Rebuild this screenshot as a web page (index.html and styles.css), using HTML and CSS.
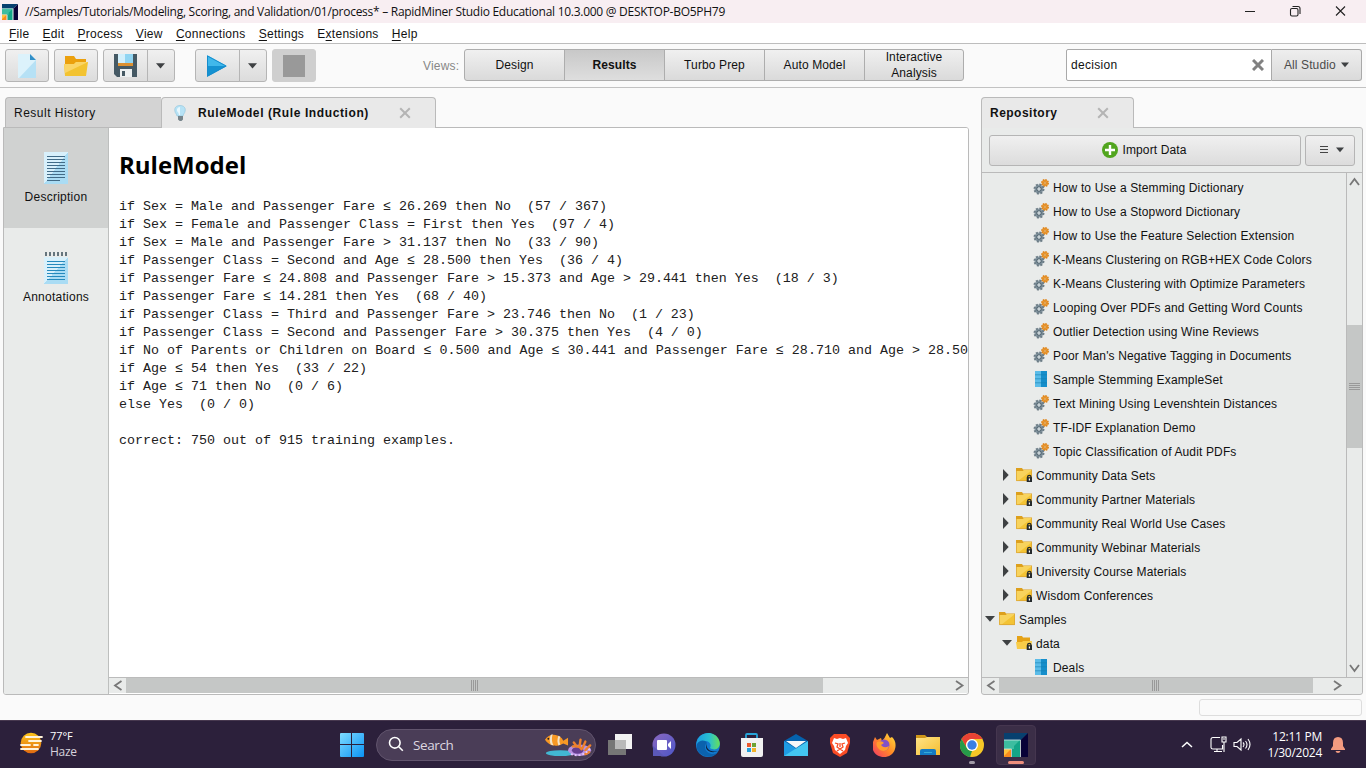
FILE: index.html
```html
<!DOCTYPE html>
<html lang="en">
<head>
<meta charset="utf-8">
<title>RapidMiner Studio</title>
<link rel="stylesheet" href="styles.css">
</head>
<body>
<svg class="defs" width="0" height="0" aria-hidden="true">
  <defs>
    <linearGradient id="paper" x1="0" y1="0" x2="1" y2="1"><stop offset=".5" stop-color="#d8f0fb"/><stop offset=".5" stop-color="#aadcf4"/></linearGradient>
    <linearGradient id="win" x1="0" y1="0" x2="1" y2="1"><stop offset="0" stop-color="#7fdcff"/><stop offset="1" stop-color="#0a93f5"/></linearGradient>
    <linearGradient id="sun" x1="0" y1="0" x2="0" y2="1"><stop offset="0" stop-color="#fdc419"/><stop offset="1" stop-color="#df6a12"/></linearGradient>
    <linearGradient id="edge1" x1="0" y1="0" x2="1" y2="0"><stop offset="0" stop-color="#1b9de2"/><stop offset=".55" stop-color="#29bfd0"/><stop offset="1" stop-color="#67df58"/></linearGradient>
    <linearGradient id="chat" x1="0" y1="0" x2="1" y2="1"><stop offset="0" stop-color="#8b69c0"/><stop offset="1" stop-color="#4c56c8"/></linearGradient>
    <linearGradient id="fox" x1="1" y1="0" x2="0" y2="1"><stop offset="0" stop-color="#ffe43f"/><stop offset=".5" stop-color="#ff8b26"/><stop offset="1" stop-color="#f03668"/></linearGradient>
    <linearGradient id="explorer" x1="0" y1="0" x2="1" y2="1"><stop offset="0" stop-color="#ffe487"/><stop offset="1" stop-color="#f5bd30"/></linearGradient>
  </defs>
  <symbol id="rm" viewBox="0 0 24 24"><path fill="#07406f" d="M0 0h24l-7 7H0z"/><path fill="#080238" d="M24 0v24h-7V7z"/><path fill="#14a587" d="M0 7h16v17H8v-8H0z"/><path fill="#3dbda0" d="M0 7h16l-6 6v3H0z"/><path fill="#fa8b1c" d="M0 16h7v8H0z"/><path fill="#ffc23b" d="M0 16h7l-7 7z"/><path fill="none" stroke="#d5ebe8" stroke-width=".8" d="M0 7h16.500v17M0 16h7.500v8"/></symbol>
  <symbol id="process" viewBox="0 0 16 16"><circle cx="12" cy="4" r="3.2" fill="#ee9a32" stroke="#dd861f" stroke-width="1.600" stroke-dasharray="1.500 1"/><circle cx="12" cy="4" r="1.200" fill="#f7d5a0" stroke="#c97914" stroke-width=".7"/><circle cx="6" cy="10" r="4.500" fill="#8799a4" stroke="#6c7c86" stroke-width="2" stroke-dasharray="2 1.500"/><circle cx="6" cy="10" r="2.200" fill="#e7edf0" stroke="#51646f" stroke-width="1.100"/><circle cx="6" cy="10" r=".8" fill="#a0afb7"/></symbol>
  <symbol id="dataset" viewBox="0 0 16 16"><path fill="#5bbce8" d="M2 0h6v16H2z"/><path fill="#168ecb" d="M8 0h6v16H8z"/><path stroke="#147dae" stroke-width=".6" d="M2 3.800h12M2 7.800h12M2 11.800h12"/></symbol>
  <symbol id="folder" viewBox="0 0 16 16"><path fill="#dda01d" d="M0 1h6l1 1.500h9V5H0z"/><path fill="#f3c334" d="M0 4h7l1-1h8v11H0z"/><path fill="#f8d35d" d="M0 4h7l1-1h8L2 14H0z"/><path fill="none" stroke="#d9a333" stroke-width=".8" d="M.4 4v9.600h15.200V3"/></symbol>
  <symbol id="lock" viewBox="0 0 16 16"><path fill="none" stroke="#252a2c" stroke-width="1.300" d="M11.700 11V9.600q0-1.300 1.600-1.300t1.600 1.300V11"/><path fill="#252a2c" d="M10.700 10.200H16V15h-5.300z"/><path fill="#fff" d="M12.800 11.500h1.200v2h-1.200z"/></symbol>
  <symbol id="opened" viewBox="0 0 16 16"><path fill="#e5a216" d="M1 1h5l1 1.500h7V8H1z"/><path fill="#f8cc49" d="M0 7h6l1-1h9l-1 8H1z"/></symbol>
  <symbol id="right" viewBox="0 0 6 12"><path fill="#3e4143" d="M0 0l5.700 6L0 12z"/></symbol>
  <symbol id="down" viewBox="0 0 10 6"><path fill="#3e4143" d="M0 0h10L5 5.800z"/></symbol>
  <symbol id="cross" viewBox="0 0 12 12"><path fill="none" stroke="#b4b4b4" stroke-width="2" d="M1.200 1.200l9.600 9.600m0-9.600l-9.600 9.600"/></symbol>
</svg>

<header class="titlebar">
  <svg class="app-icon"><use href="#rm"/></svg>
  <span class="window-title">//Samples/Tutorials/Modeling, Scoring, and Validation/01/process* – RapidMiner Studio Educational 10.3.000 @ DESKTOP-BO5PH79</span>
  <svg class="window-controls" width="110" height="20" fill="none" stroke="#222" stroke-width="1.100"><path d="M5 9.500h10M96 4.500l9 9m0-9l-9 9"/><rect x="50.500" y="6.500" width="7.500" height="7.500" rx="1.500"/><path d="M52.500 4.500h5.500q2 0 2 2V12"/></svg>
</header>

<nav class="menubar">
  <span><u>F</u>ile</span><span><u>E</u>dit</span><span><u>P</u>rocess</span><span><u>V</u>iew</span><span><u>C</u>onnections</span><span><u>S</u>ettings</span><span>E<u>x</u>tensions</span><span><u>H</u>elp</span>
</nav>

<section class="toolbar">
  <div class="tools">
    <div class="button single"><svg width="18" height="24" viewBox="0 0 18 24"><path fill="#dcf2fb" d="M0 0h12l6 6v18H0z"/><path fill="#b6e1f5" d="M18 6v18H1z"/><path fill="#318fc8" d="M12 0l6 6h-6z"/></svg></div>
    <div class="button single"><svg width="24" height="22" viewBox="0 0 24 22"><path fill="#eba00d" d="M1 1h9l2 3h10v8H1z"/><path fill="#f3c331" d="M0 9h10l2-2h12l-2 14H1z"/><path fill="#fad567" d="M0 9h10l2-2h12L1 18z"/></svg></div>
    <div class="split"><div class="button"><svg width="23" height="23" viewBox="0 0 23 23"><path fill="#455964" d="M0 0h23v23H3l-3-3z"/><path fill="#d2effb" d="M4 0h15v9H4z"/><path fill="#91d5f2" d="M11 0h8v9h-8z"/><path fill="#dc9132" d="M4 9h15v3H4z"/><path fill="#edf1f2" d="M6 15h12v8H6z"/><path fill="#455964" d="M8 17h3v5H8z"/></svg></div><div class="button drop"><svg width="9" height="6"><use href="#down"/></svg></div></div>
    <div class="split run"><div class="button"><svg width="20" height="22" viewBox="0 0 20 22"><path fill="#40b8eb" d="M0 0l20 11H0z"/><path fill="#1592d1" d="M0 11h20L0 22z"/><path fill="none" stroke="#168ccc" d="M.5 1l18.500 10L.5 21z"/></svg></div><div class="button drop"><svg width="9" height="6"><use href="#down"/></svg></div></div>
    <div class="button stop"><i></i></div>
  </div>
  <div class="views"><span class="views-label">Views:</span><div class="segments"><div>Design</div><div class="active">Results</div><div>Turbo Prep</div><div>Auto Model</div><div>Interactive<br>Analysis</div></div></div>
  <div class="search"><div class="query">decision<svg width="12" height="12"><path fill="none" stroke="#818181" stroke-width="3" d="M1 1l10 10m0-10L1 11"/></svg></div><div class="scope">All Studio<svg width="8" height="6"><use href="#down"/></svg></div></div>
</section>

<main class="workspace">
  <section class="results">
    <div class="tabs">
      <div class="tab history">Result History</div>
      <div class="tab model"><svg width="12" height="17" viewBox="0 0 12 17"><path fill="#b7e2f5" stroke="#8ec5dc" stroke-width=".6" d="M3 11Q2.500 9 1.300 7.500C-.5 3 2.200.5 6 .5S12.500 3 10.700 7.500Q9.500 9 9 11z"/><path fill="#e8f7fd" d="M3 4q1-2 3-2v8H5q0-2-2-4z"/><path fill="#76848b" d="M4 11h5v3.500L7.500 16H5.700L4 14.500z"/></svg><b>RuleModel (Rule Induction)</b><svg class="close" width="12" height="12"><use href="#cross"/></svg></div>
    </div>
    <div class="result-panel">
      <aside class="side">
        <div class="side-item selected"><svg width="24" height="32"><path fill="url(#paper)" d="M0 0h24v32H0z"/><path stroke="#426b87" stroke-width="1" d="M3 4.500h18M3 7.500h18M3 10.500h18M3 13.500h18M3 16.500h18M3 19.500h18M3 22.500h18M3 25.500h18M3 28.500h13"/></svg><span>Description</span></div>
        <div class="side-item"><svg width="24" height="32"><path fill="url(#paper)" d="M0 5h24v27H0z"/><path stroke="#66757d" stroke-width="4" stroke-dasharray="2 2" d="M1 2h22"/><path stroke="#268abd" stroke-width="1" d="M3 9.500h18M3 12.500h18M3 15.500h18M3 18.500h18M3 21.500h18M3 24.500h18M3 27.500h18"/></svg><span>Annotations</span></div>
      </aside>
      <div class="document">
        <article>
          <h1>RuleModel</h1>
<pre>if Sex = Male and Passenger Fare ≤ 26.269 then No  (57 / 367)
if Sex = Female and Passenger Class = First then Yes  (97 / 4)
if Sex = Male and Passenger Fare &gt; 31.137 then No  (33 / 90)
if Passenger Class = Second and Age ≤ 28.500 then Yes  (36 / 4)
if Passenger Fare ≤ 24.808 and Passenger Fare &gt; 15.373 and Age &gt; 29.441 then Yes  (18 / 3)
if Passenger Fare ≤ 14.281 then Yes  (68 / 40)
if Passenger Class = Third and Passenger Fare &gt; 23.746 then No  (1 / 23)
if Passenger Class = Second and Passenger Fare &gt; 30.375 then Yes  (4 / 0)
<span class="long-rule">if No of Parents or Children on Board ≤ 0.500 and Age ≤ 30.441 and Passenger Fare ≤ 28.710 and Age &gt; 28.50</span>
if Age ≤ 54 then Yes  (33 / 22)
if Age ≤ 71 then No  (0 / 6)
else Yes  (0 / 0)

correct: 750 out of 915 training examples.</pre>
        </article>
        <div class="hscroll"><svg class="arrow" width="17" height="15"><path d="M12.500 3L6 7.500l6.500 4.500"/></svg><div class="hthumb main-thumb"><i></i></div><svg class="arrow end" width="17" height="15"><path d="M5 3l6.500 4.500L5 12"/></svg></div>
      </div>
    </div>
  </section>

  <section class="repository">
    <div class="tabs"><div class="tab repo-tab"><b>Repository</b><svg class="close" width="12" height="12"><use href="#cross"/></svg></div></div>
    <div class="repo-panel">
      <div class="repo-actions">
        <div class="button import"><svg width="16" height="16"><circle cx="8" cy="8" r="8" fill="#51a51e"/><path d="M8 3v10M3 8h10" stroke="#fff" stroke-width="2.400"/></svg>Import Data</div>
        <div class="button list-menu"><svg width="8" height="8"><path stroke="#444" d="M0 .5h8M0 3.500h8M0 6.500h8"/></svg><svg width="8" height="6"><use href="#down"/></svg></div>
      </div>
      <div class="tree-wrap">
        <ul class="tree">
          <li class="leaf"><svg><use href="#process"/></svg><span>How to Use a Stemming Dictionary</span></li>
          <li class="leaf"><svg><use href="#process"/></svg><span>How to Use a Stopword Dictionary</span></li>
          <li class="leaf"><svg><use href="#process"/></svg><span>How to Use the Feature Selection Extension</span></li>
          <li class="leaf"><svg><use href="#process"/></svg><span>K-Means Clustering on RGB+HEX Code Colors</span></li>
          <li class="leaf"><svg><use href="#process"/></svg><span>K-Means Clustering with Optimize Parameters</span></li>
          <li class="leaf"><svg><use href="#process"/></svg><span>Looping Over PDFs and Getting Word Counts</span></li>
          <li class="leaf"><svg><use href="#process"/></svg><span>Outlier Detection using Wine Reviews</span></li>
          <li class="leaf"><svg><use href="#process"/></svg><span>Poor Man's Negative Tagging in Documents</span></li>
          <li class="leaf"><svg><use href="#dataset"/></svg><span>Sample Stemming ExampleSet</span></li>
          <li class="leaf"><svg><use href="#process"/></svg><span>Text Mining Using Levenshtein Distances</span></li>
          <li class="leaf"><svg><use href="#process"/></svg><span>TF-IDF Explanation Demo</span></li>
          <li class="leaf"><svg><use href="#process"/></svg><span>Topic Classification of Audit PDFs</span></li>
          <li class="branch"><svg class="right"><use href="#right"/></svg><svg><use href="#folder"/><use href="#lock"/></svg><span>Community Data Sets</span></li>
          <li class="branch"><svg class="right"><use href="#right"/></svg><svg><use href="#folder"/><use href="#lock"/></svg><span>Community Partner Materials</span></li>
          <li class="branch"><svg class="right"><use href="#right"/></svg><svg><use href="#folder"/><use href="#lock"/></svg><span>Community Real World Use Cases</span></li>
          <li class="branch"><svg class="right"><use href="#right"/></svg><svg><use href="#folder"/><use href="#lock"/></svg><span>Community Webinar Materials</span></li>
          <li class="branch"><svg class="right"><use href="#right"/></svg><svg><use href="#folder"/><use href="#lock"/></svg><span>University Course Materials</span></li>
          <li class="branch"><svg class="right"><use href="#right"/></svg><svg><use href="#folder"/><use href="#lock"/></svg><span>Wisdom Conferences</span></li>
          <li class="root"><svg class="down"><use href="#down"/></svg><svg><use href="#folder"/></svg><span>Samples</span></li>
          <li class="branch expanded"><svg class="down"><use href="#down"/></svg><svg><use href="#opened"/><use href="#lock"/></svg><span>data</span></li>
          <li class="leaf"><svg><use href="#dataset"/></svg><span>Deals</span></li>
        </ul>
        <div class="vscroll"><svg class="arrow" width="15" height="18"><path d="M3 12l4.500-6L12 12"/></svg><div class="vthumb"><i></i></div><svg class="arrow bottom" width="15" height="18"><path d="M3 6l4.500 6L12 6"/></svg></div>
      </div>
      <div class="hscroll"><svg class="arrow" width="17" height="15"><path d="M12.500 3L6 7.500l6.500 4.500"/></svg><div class="hthumb repo-thumb"><i></i></div><svg class="arrow repo-end" width="17" height="15"><path d="M5 3l6.500 4.500L5 12"/></svg></div>
    </div>
  </section>
</main>
<div class="statusbar"><div class="progress"></div></div>

<footer class="taskbar">
  <div class="weather"><svg width="26" height="24"><circle cx="13" cy="12" r="10.300" fill="url(#sun)"/><path stroke="#fff3da" stroke-width="1.800" stroke-linecap="round" d="M8 6h16M11 10h12M3 14h9M16 14h4M3 18h17"/></svg><div><span>77°F</span><span>Haze</span></div></div>
  <div class="dock">
    <svg class="start" width="24" height="24"><path fill="url(#win)" d="M1 0h10v11H0V1q0-1 1-1zM12 0h11q1 0 1 1v10H12zM0 12h11v12H1q-1 0-1-1zM12 12h12v11q0 1-1 1H12z"/></svg>
    <div class="task-search"><svg width="17" height="17"><circle cx="6.800" cy="6.800" r="5.300"/><path d="M10.800 10.800l4 4"/></svg><span>Search</span>
      <svg class="fish" width="50" height="25" viewBox="0 0 52 26"><ellipse cx="17" cy="22" rx="15" ry="3" fill="#42b8d2"/><path fill="#f79824" d="M1 8q4-6 11-5 6 1 8 6l5-3v8l-5-2q-4 3-9 2Q5 14 1 8z"/><path fill="#f3e4c9" d="M7 3l2-1q-2 7 1 12l-3-1Q5 8 7 3zM15 4l2 1q-2 4 0 8l-2 1q-2-5 0-10z"/><circle cx="4.500" cy="7" r="1" fill="#222"/><ellipse cx="37" cy="19" rx="12" ry="6" fill="#b791e2"/><ellipse cx="35" cy="19" rx="6" ry="3.500" fill="#663e8f"/><path fill="none" stroke="#ed812c" stroke-width="2.500" stroke-linecap="round" d="M30 15q7-1 9 3m-5-3l-3-4m6 4l1-7m2 9l3-7m0 9l5-5m-5 9l4-2"/><path stroke="#e3c4fa" stroke-width="2" stroke-dasharray="2 2" fill="none" d="M28 23q12 4 20-6"/></svg>
    </div>
    <div class="apps">
      <svg viewBox="0 0 24 24"><path fill="#f2f2f2" d="M7 1h17v15H7z"/><path fill="#767676" d="M0 7h18v15H0z"/><path fill="#b9b9b9" d="M7 7h11v9H7z"/></svg>
      <svg viewBox="0 0 24 24"><circle cx="12" cy="12" r="11.500" fill="url(#chat)"/><path fill="#5b59b8" d="M1 13v10h11z"/><rect x="5" y="7" width="10" height="10" rx="1" fill="#fff"/><path fill="#fff" d="M16 11l3-3v8l-3-3z"/></svg>
      <svg viewBox="0 0 24 24"><circle cx="12" cy="12" r="12" fill="#137bd0"/><path fill="url(#edge1)" d="M.5 10C2-1 18-4 23 7c3 7-3 12-9 8 2-4-1-7-5-7-3 0-6 1-8.500 4z"/><path fill="#0b62ad" d="M1 11c2-4 8-5 10-1-4 3-2 10 5 11 3 0 5-1 6-2-5 8-18 5-21-3z"/><path fill="#101f3a" d="M11 10c-2 5 3 10 11 8-6 3-15 0-11-8z"/></svg>
      <svg viewBox="0 0 24 24"><path fill="none" stroke="#27a5d9" stroke-width="1.800" d="M6 6V2q0-1 1-1h9q1 0 1 1v4"/><path fill="#f1f1f1" d="M1 5h22v17q0 2-2 2H3q-2 0-2-2z"/><path fill="#eb572b" d="M7 10h4v4H7z"/><path fill="#6ea332" d="M12 10h4v4h-4z"/><path fill="#21a0dc" d="M7 15h4v4H7z"/><path fill="#f2b329" d="M12 15h4v4h-4z"/></svg>
      <svg viewBox="0 0 24 24"><path fill="#0562ad" d="M0 8L12 1l12 7v7H0z"/><path fill="#f5f7f9" d="M2 8h20L12 15z"/><path fill="#1e9be3" d="M0 8l24 15H0z"/><path fill="#43c6f1" d="M24 8L0 23h24z"/></svg>
      <svg viewBox="0 0 24 24"><path fill="#fb4c25" d="M6 1h12l4 4v5l-3 10-7 4-7-4-3-10V5z"/><path fill="#fff" d="M6 5l3 1 3-1 3 1 3-1 2 5-2 3-1 4-5 4-5-4-1-4-2-3z"/><path fill="none" stroke="#fb4c25" stroke-width="1.300" d="M7 10l3 1-1 3 3 2 3-2-1-3 3-1M12 10v4m-3 4l3-2 3 2"/></svg>
      <svg viewBox="0 0 24 24"><path fill="url(#fox)" d="M1 9l2-5 2 3 4-2 1 3q3-3 5-8l3 5 2-1q5 5 3 12c-3 11-19 10-22 1z"/><circle cx="12" cy="12" r="5.500" fill="#8151c6"/><path fill="#ff9c2c" d="M5 9q5-2 7 1l-3 2q3 4 8 1-2 7-9 4-5-4-3-8z"/></svg>
      <svg viewBox="0 0 24 24"><path fill="#cf9619" d="M0 4V2h9l2 2h13v5H0z"/><path fill="url(#explorer)" d="M0 5h9l2-1h13v18H0z"/><path fill="#147bc2" d="M4 22v-4q0-2 2-2h12q2 0 2 2v4z"/><path fill="#36acd5" d="M8 19h8v1H8z"/></svg>
      <svg viewBox="0 0 24 24"><circle cx="12" cy="12" r="12" fill="#f6c727"/><path fill="#e94234" d="M1.600 6a12 12 0 0 1 20.800 0H12a6 6 0 0 0-5.200 9z"/><path fill="#269b4a" d="M1.600 6l5.200 9a6 6 0 0 0 5.200 3l-2 6A12 12 0 0 1 1.600 6z"/><circle cx="12" cy="12" r="6" fill="#fff"/><circle cx="12" cy="12" r="4.700" fill="#387fe3"/></svg>
      <div class="app-current"><svg viewBox="0 0 24 24"><use href="#rm"/></svg></div>
    </div>
  </div>
  <div class="tray">
    <svg width="12" height="12" fill="none" stroke="#fff" stroke-width="1.500"><path d="M1 8L6 3.500 11 8"/></svg>
    <svg width="17" height="18" fill="none" stroke="#fff" stroke-width="1.100"><path d="M10 1.500H3Q1 1.500 1 3.500v8q0 1.500 2 1.500h9.500V9M7 13v3M4 15.500h8M14 6v10M12 1h4v5h-4zM13 3h2"/></svg>
    <svg width="18" height="16" fill="none" stroke="#fff" stroke-width="1.100"><path d="M1 5.500h3L8 2v11l-4-3.500H1zM10 5.500q2 2 0 4.500M12.500 4q3 3.500 0 7.500M15 2q4 5.500 0 11"/></svg>
    <div class="clock"><span>12:11 PM</span><span>1/30/2024</span></div>
    <svg class="bell" width="14" height="16"><path fill="#f39b80" d="M7 0q5 0 5 6v3l2 3v1H0v-1l2-3V6q0-6 5-6zM4.500 14h5q-.5 2-2.500 2t-2.500-2z"/></svg>
  </div>
</footer>
</body>
</html>
```
FILE: styles.css
```css
* { box-sizing: border-box; }
body { margin: 0; width: 1366px; height: 768px; overflow: hidden; display: flex; flex-direction: column; background: #fafafa; color: #111; font: 12px/16px "Liberation Sans", Arial, sans-serif; }
svg { display: block; flex: none; }
.defs { position: absolute; }
.titlebar { height: 23px; flex: none; display: flex; align-items: center; background: #f8eef2; padding-left: 2px; }
.app-icon { width: 16px; height: 16px; }
.window-title { margin-left: 7px; font: 12px/18px "Open Sans", "Noto Sans", sans-serif; letter-spacing: -.275px; white-space: nowrap; }
.window-controls { margin-left: auto; margin-right: 16px; }
.menubar { height: 21px; flex: none; display: flex; gap: 13.2px; padding: 4px 9px 0; background: #fff; border-bottom: 1px solid #bdbdbd; letter-spacing: .26px; line-height: 15px; }
.menubar u { text-underline-offset: 2px; }
.toolbar { height: 44px; flex: none; display: grid; grid-template-columns: 418px 648px 296px; padding: 5px 0 0 5px; border-bottom: 1px solid #c2c2c2; }
.tools { display: flex; }
.button { height: 33px; display: flex; align-items: center; justify-content: center; background: linear-gradient(#f0f0f0, #dcdcdc); border: 1px solid #b5b5b5; border-radius: 3px; }
.single { width: 44px; margin-right: 5px; }
.split { display: flex; width: 72px; }
.split .button:first-child { width: 45px; padding-right: 1px; border-radius: 3px 0 0 3px; }
.split .drop { width: 28px; margin-left: -1px; padding-right: 1px; border-radius: 0 3px 3px 0; }
.run { margin-left: 20px; }
.stop { width: 44px; margin-left: 5px; background: #cfcfcf; border-color: #cfcfcf; }
.stop i { width: 22px; height: 22px; background: #999; }
.views { display: flex; align-items: flex-start; }
.views-label { width: 41px; margin-top: 9px; color: #878787; letter-spacing: .2px; }
.segments { display: flex; width: 500px; height: 32px; border: 1px solid #adadad; border-radius: 3px; overflow: hidden; background: linear-gradient(#f0f0f0, #dadada); }
.segments div { flex: 0 0 100px; display: flex; align-items: center; justify-content: center; text-align: center; border-right: 1px solid #adadad; letter-spacing: .12px; }
.segments div:last-child { flex-basis: 98px; border-right: 0; }
.segments .active { font-weight: bold; background: linear-gradient(#c8c8c8, #dedede); }
.search { display: flex; height: 32px; margin-left: -5px; }
.query { width: 206px; padding: 0 7px 0 4px; display: flex; align-items: center; justify-content: space-between; background: #fff; border: 1px solid #a9a9a9; border-radius: 2px 0 0 2px; letter-spacing: .3px; }
.scope { width: 90px; padding-left: 12px; display: flex; align-items: center; gap: 5px; color: #4b4b4b; background: linear-gradient(#eee, #dadada); border: 1px solid #a9a9a9; border-left: 0; border-radius: 0 3px 3px 0; letter-spacing: .1px; }
.workspace { height: 607px; flex: none; display: flex; gap: 12px; padding: 9px 3px 0; }
.results { width: 966px; }
.tabs { height: 30px; display: flex; padding-left: 2px; }
.tab { height: 31px; display: flex; align-items: center; background: #e9e9e9; border: 1px solid #bababa; border-bottom: 0; border-radius: 4px 4px 0 0; position: relative; z-index: 1; }
.history { width: 156px; height: 30px; padding-left: 8px; background: #d3d3d3; border-right: 0; border-radius: 4px 0 0; letter-spacing: .5px; }
.model { width: 275px; padding-left: 12px; gap: 12px; letter-spacing: .6px; }
.model .close { margin-left: 18px; }
.result-panel { height: 568px; display: flex; overflow: hidden; border: 1px solid #bababa; border-radius: 0 3px 3px 3px; background: #fff; }
.side { width: 105px; flex: none; background: #e9ebea; border-right: 1px solid #bdbfbe; }
.side-item { height: 100px; display: flex; flex-direction: column; align-items: center; padding-top: 24px; gap: 5px; letter-spacing: .25px; }
.selected { background: #d0d2d1; }
.document { width: 859px; flex: none; display: flex; flex-direction: column; }
article { flex: 1; overflow: hidden; padding-left: 10px; background: #fff; }
h1 { font: bold 24px/34px "Open Sans", "Noto Sans", sans-serif; margin: 20px 0 16px; color: #000; }
pre { margin: 0; font: 13.333px/18px "Liberation Mono", "Courier New", monospace; color: #202020; }
.long-rule { letter-spacing: .012px; }
.hscroll { height: 16px; flex: none; display: flex; background: #e9ebea; border-top: 1px solid #bbb; margin-bottom: 1px; }
.arrow { fill: none; stroke: #777; stroke-width: 1.8; }
.hthumb { display: flex; align-items: center; justify-content: center; background: #c5c7c6; }
.hthumb i { width: 8px; height: 11px; background: repeating-linear-gradient(90deg, #999 0 1px, transparent 1px 2px); }
.main-thumb { width: 697px; }
.end { margin-left: auto; }
.repository { width: 382px; }
.repository .tabs { padding-left: 0; }
.repo-tab { width: 153px; padding-left: 8px; gap: 40px; letter-spacing: .48px; }
.repo-panel { height: 568px; display: flex; flex-direction: column; background: #e9ebea; border: 1px solid #bababa; border-radius: 0 3px 3px; }
.repo-actions { height: 45px; flex: none; padding: 7px; display: flex; gap: 4px; border-bottom: 1px solid #bababa; }
.repo-actions .button { height: 31px; padding-bottom: 2px; }
.import { width: 312px; gap: 4px; letter-spacing: .12px; padding-right: 1px; }
.list-menu { width: 50px; gap: 8px; padding-left: 3px; }
.tree-wrap { flex: 1; min-height: 0; display: flex; }
.tree { list-style: none; margin: 0; padding: 3px 0 0; width: 365px; overflow: hidden; border-right: 1px solid #bababa; letter-spacing: .14px; }
.tree li { height: 24px; display: flex; align-items: center; gap: 4px; white-space: nowrap; }
.tree svg { width: 16px; height: 16px; margin-bottom: 2px; }
.tree .right { width: 6px; height: 12px; margin-right: 3px; }
.tree .down { width: 10px; height: 6px; }
.leaf { padding-left: 51px; }
.branch { padding-left: 21px; }
.root { padding-left: 3px; }
.expanded { padding-left: 20px; }
.vscroll { width: 15px; display: flex; flex-direction: column; }
.vthumb { height: 123px; margin-top: 134px; display: flex; align-items: center; justify-content: center; background: #c5c7c6; }
.vthumb i { width: 11px; height: 8px; background: repeating-linear-gradient(#999 0 1px, transparent 1px 2px); }
.bottom { margin-top: auto; }
.repo-thumb { width: 314px; }
.repo-end { margin-left: 16px; }
.statusbar { height: 26px; flex: none; padding: 4px 4px 0; display: flex; justify-content: flex-end; }
.progress { width: 163px; height: 17px; border: 1px solid #ddd; border-radius: 3px; }
.taskbar { height: 48px; flex: none; margin-top: -1px; border-top: 1px solid #47384f; display: grid; grid-template-columns: 339px 842px 185px; background: #2c203b; color: #fff; font: 12px/16px "Open Sans", "Noto Sans", sans-serif; }
.weather { display: flex; gap: 6px; padding: 10px 0 0 18px; font-size: 11px; letter-spacing: -.1px; }
.weather div { display: grid; align-content: start; margin-top: -3px; }
.weather span:last-child { color: #d7d2dc; font-size: 12px; letter-spacing: -.3px; }
.dock { display: flex; align-items: center; }
.start { margin-left: 1px; }
.task-search { width: 220px; height: 32px; display: flex; align-items: center; margin-left: 12px; padding-left: 11px; gap: 8px; border: 1px solid #61546d; border-radius: 16px; background: #4a3d57; color: #ddd7e0; font-size: 13.5px; letter-spacing: -.4px; }
.task-search > svg:first-child { fill: none; stroke: #fff; stroke-width: 1.6; }
.fish { margin-left: auto; margin-right: 1px; }
.apps { display: flex; align-items: center; gap: 20px; margin-left: 12px; }
.apps > svg { width: 24px; height: 24px; }
.app-current { width: 40px; height: 40px; margin-left: -8px; display: flex; align-items: center; justify-content: center; position: relative; border: 1px solid #45364f; background: #3b2e47; border-radius: 4px; }
.app-current svg { width: 24px; height: 24px; }
.app-current::before { content: ""; position: absolute; left: -28px; bottom: 0; width: 6px; height: 3px; border-radius: 2px; background: #a19aa7; }
.app-current::after { content: ""; position: absolute; bottom: 0; width: 16px; height: 3px; border-radius: 2px; background: #ee8f7d; }
.tray { display: flex; align-items: center; }
.tray > svg:nth-child(2) { margin-left: 17px; }
.tray > svg:nth-child(3) { margin-left: 6px; }
.clock { width: 66px; margin-left: 5px; margin-right: 9px; display: grid; text-align: right; font-size: 12px; letter-spacing: -.25px; }
```
